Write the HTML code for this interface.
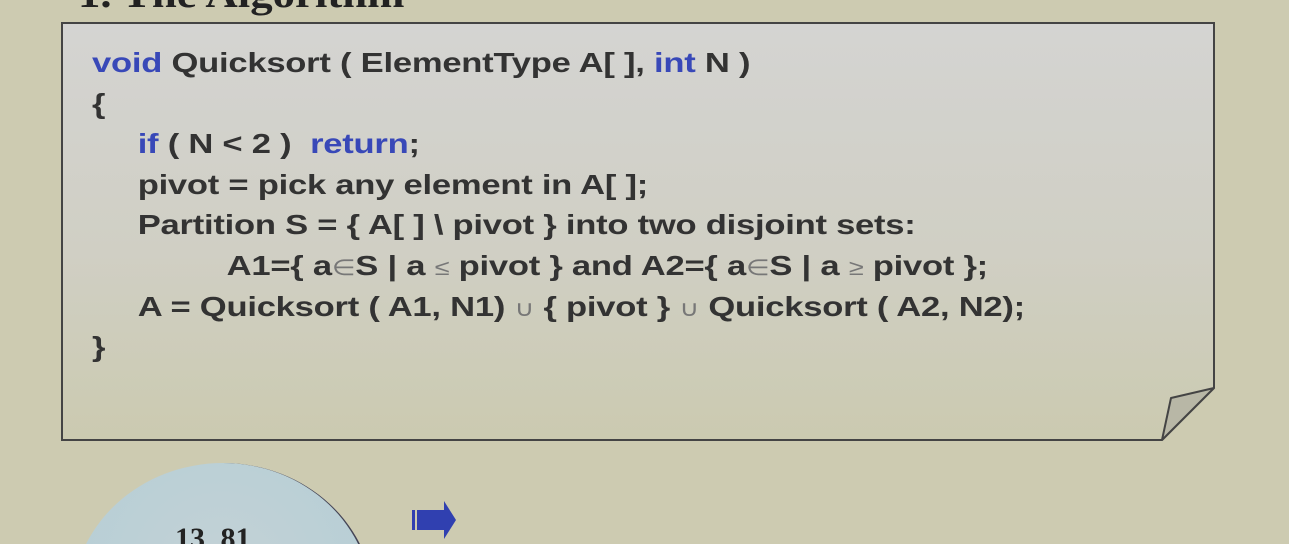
<!DOCTYPE html>
<html><head><meta charset="utf-8"><style>
html,body{margin:0;width:1289px;height:544px;overflow:hidden}
body{background:#cdcbb1;position:relative;font-family:"Liberation Sans",Arial,sans-serif}
.wrap{position:absolute;left:0;top:0;width:1289px;height:544px;overflow:hidden}
.title{position:absolute;left:78px;top:-30px;font:bold 40px "Liberation Serif",serif;color:#222;white-space:nowrap;transform:scaleX(1.12);transform-origin:0 0}
svg.box{position:absolute;left:0;top:0}
.code{position:absolute;left:92px;top:43px;font-weight:bold;font-size:28px;color:#333;white-space:pre;line-height:40.6px;letter-spacing:-0.2px;transform:scaleX(1.235);transform-origin:0 0}
.code div{height:40.6px}
.i1{margin-left:37px}.i2{margin-left:109px}
.k{color:#3848b8}
.s{color:#777;font-weight:normal;font-size:22px}
.circ{position:absolute;left:72px;top:463px;width:300px;height:280px;border-radius:50%;background:radial-gradient(circle at 50% 40%,#c4d2d6,#b2cdd5);border-right:2px solid #445}
.nums{position:absolute;left:175px;top:522px;font:bold 30px "Liberation Serif",serif;color:#222;word-spacing:8px}
</style></head><body><div class="wrap">
<div class="title">1. The Algorithm</div>
<svg class="box" width="1289" height="544">
<defs><linearGradient id="g" x1="0" y1="0" x2="0" y2="1"><stop offset="0" stop-color="#d4d4d2"/><stop offset="0.55" stop-color="#d0cfc4"/><stop offset="1" stop-color="#cbcab0"/></linearGradient></defs>
<path d="M62 23 H1214 V388 L1162 440 H62 Z" fill="url(#g)" stroke="#444" stroke-width="2"/>
<path d="M1214 388 L1171 398 L1162 440 Z" fill="#b8b7a6" stroke="#444" stroke-width="2" stroke-linejoin="round"/>
</svg>
<div class="code"><div><span class="k">void</span> Quicksort ( ElementType A[ ], <span class="k">int</span> N )</div><div>{</div><div class="i1"><span class="k">if</span> ( N &lt; 2 )  <span class="k">return</span>;</div><div class="i1">pivot = pick any element in A[ ];</div><div class="i1">Partition S = { A[ ] \ pivot } into two disjoint sets:</div><div class="i2">A1={ a<span class="s">∈</span>S | a <span class="s">≤</span> pivot } and A2={ a<span class="s">∈</span>S | a <span class="s">≥</span> pivot };</div><div class="i1">A = Quicksort ( A1, N1) <span class="s">∪</span> { pivot } <span class="s">∪</span> Quicksort ( A2, N2);</div><div>}</div></div>
<div class="circ"></div>
<div class="nums">13 81</div>
<svg style="position:absolute;left:410px;top:498px" width="50" height="46"><rect x="2" y="12" width="3" height="20" fill="#3040b0"/><path d="M7 12 H34 V3 L46 22 L34 41 V32 H7 Z" fill="#3040b0"/></svg>
</div></body></html>
